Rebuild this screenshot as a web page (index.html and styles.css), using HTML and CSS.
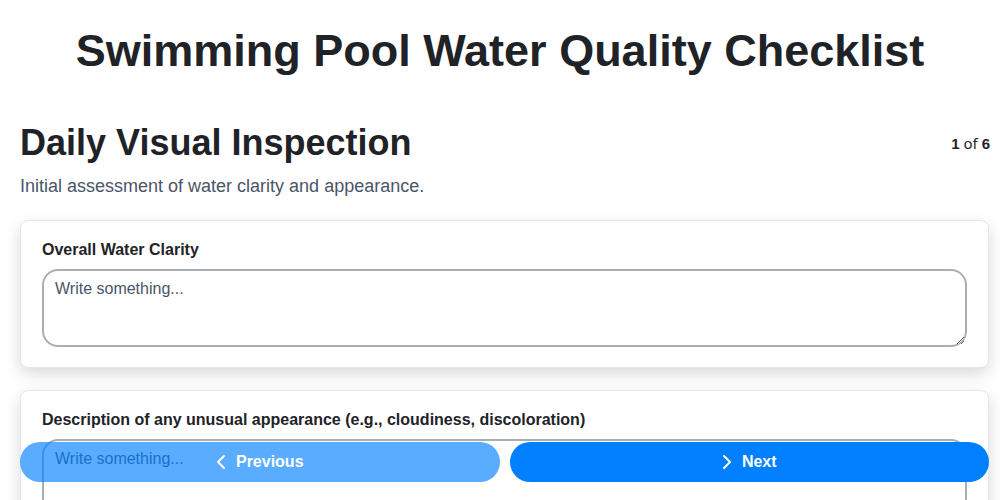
FILE: index.html
```html
<!DOCTYPE html>
<html>
    <head>
        <title> Swimming Pool Water Quality Checklist </title>
        <meta name="viewport" content="width=device-width, initial-scale=1.0">
        <link rel="stylesheet" href="styles.css">
    </head>
    <body>
        <h1 class="page-title">Swimming Pool Water Quality Checklist</h1>

        <div class="step">
            <div class="step-head">
                <h2>Daily Visual Inspection</h2>
                <span class="counter"><b>1</b> of <b>6</b></span>
            </div>
            <p class="step-desc">Initial assessment of water clarity and appearance.</p>

            <div class="card">
                <label class="field-label">Overall Water Clarity</label>
                <textarea class="field" placeholder="Write something..."></textarea>
            </div>

            <div class="card">
                <label class="field-label">Description of any unusual appearance (e.g., cloudiness, discoloration)</label>
                <textarea class="field" placeholder="Write something..."></textarea>
            </div>
        </div>

        <div class="nav">
            <button class="nav-btn prev" disabled>
                <svg width="10" height="16" viewBox="0 0 10 16"><polyline points="8,2 2,8 8,14" fill="none" stroke="#fff" stroke-width="2" stroke-linecap="round" stroke-linejoin="round"/></svg>
                Previous
            </button>
            <button class="nav-btn next">
                <svg width="10" height="16" viewBox="0 0 10 16"><polyline points="2,2 8,8 2,14" fill="none" stroke="#fff" stroke-width="2" stroke-linecap="round" stroke-linejoin="round"/></svg>
                Next
            </button>
        </div>
    </body>
</html>
```

FILE: styles.css
```css
/* ---- General ---- */
* {
    box-sizing: border-box;
    font-family: 'Liberation Sans', Arial, sans-serif;
}

body {
    margin: 0;
    padding: 0 10px 0 20px;
    color: #1f2328;
    background: #fff;
}

.page-title {
    font-size: 45px;
    line-height: 52px;
    margin: 25px 0 44px -10px;
    text-align: center;
}

/* ---- Step ---- */
.step-head {
    align-items: center;
    display: flex;
    justify-content: space-between;
}

.step-head h2 {
    font-size: 36px;
    line-height: 44px;
    margin: 0;
}

.counter {
    font-family: 'Noto Sans', sans-serif;
    font-size: 15px;
}

.step-desc {
    color: #4a5568;
    font-size: 18px;
    margin: 11px 0 23px;
}

.card {
    background: #fff;
    border: 1px solid #e5e7eb;
    border-radius: 8px;
    box-shadow: 0 6px 16px rgba(0, 0, 0, 0.15);
    display: flex;
    flex-direction: column;
    margin: 0 1px 22px 0;
    padding: 20px 21px 20px;
}

.field-label {
    font-size: 16px;
    font-weight: bold;
    margin-bottom: 10px;
}

.field {
    border: 2px solid #a6aeb8;
    border-radius: 16px;
    color: #1f2328;
    font-size: 16px;
    height: 78px;
    padding: 9px 11px;
    width: 100%;
}

.field::placeholder {
    color: #4a5568;
}

/* ---- Bottom nav ---- */
.nav {
    bottom: 18px;
    display: flex;
    gap: 10px;
    left: 20px;
    position: fixed;
    right: 11px;
}

.nav-btn {
    align-items: center;
    background: #0080ff;
    border: 0;
    border-radius: 20px;
    color: #fff;
    display: flex;
    flex: 1;
    font-size: 16px;
    font-weight: bold;
    gap: 10px;
    height: 40px;
    justify-content: center;
}

.nav-btn.prev {
    opacity: 0.65;
}
```
